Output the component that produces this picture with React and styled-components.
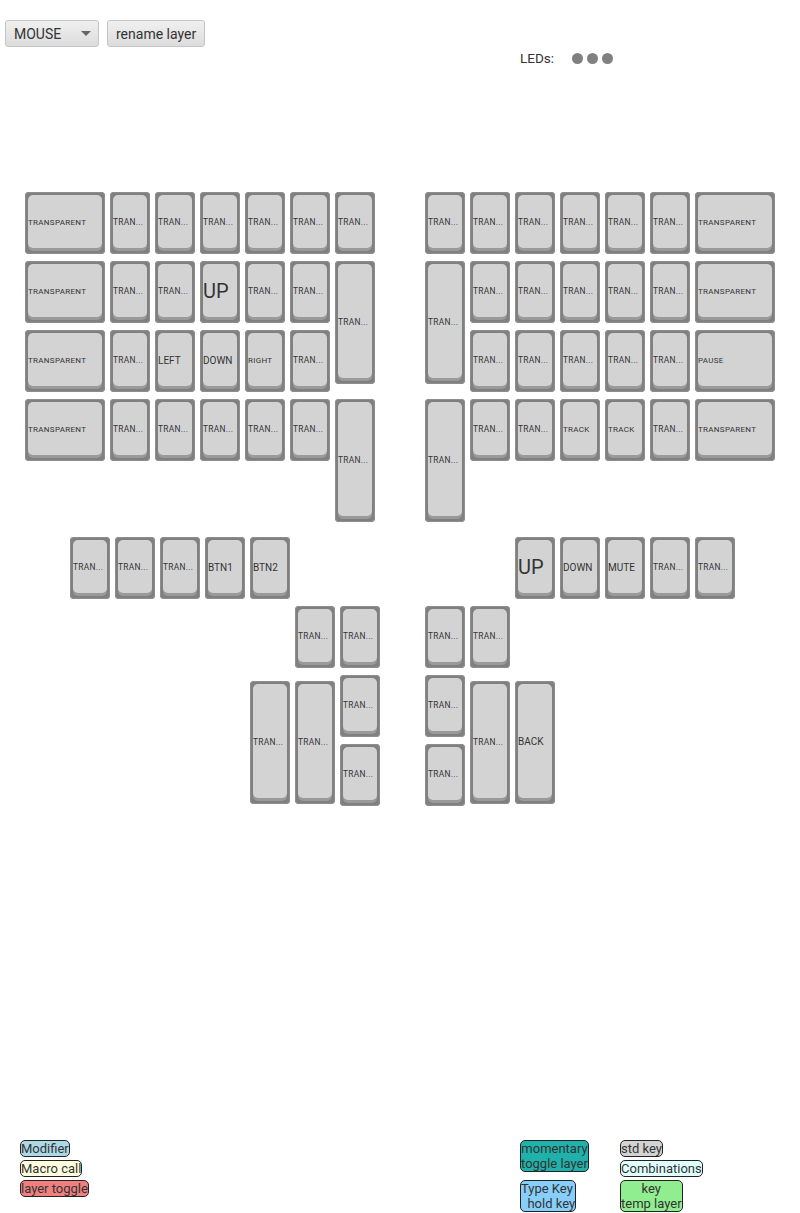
import React from 'react';
import styled, { createGlobalStyle } from 'styled-components';

const T = 'TRAN...';
const TP = 'TRANSPARENT';
const SM = 8;

// x, y are the key's top-left on the board, w/h are its size; fs is the label size
const k = (x, y, label = T, w = 40, h = 62, fs = 8.4) => ({ x, y, label, w, h, fs });

const keys = [
  // left hand
  k(25, 192, TP, 80, 62, SM), k(110, 192), k(155, 192), k(200, 192), k(245, 192), k(290, 192), k(335, 192),
  k(25, 261, TP, 80, 62, SM), k(110, 261), k(155, 261), k(200, 261, 'UP', 40, 62, 20), k(245, 261), k(290, 261), k(335, 261, T, 40, 123),
  k(25, 330, TP, 80, 62, SM), k(110, 330), k(155, 330, 'LEFT', 40, 62, 10), k(200, 330, 'DOWN', 40, 62, 10), k(245, 330, 'RIGHT', 40, 62, SM), k(290, 330),
  k(25, 399, TP, 80, 62, SM), k(110, 399), k(155, 399), k(200, 399), k(245, 399), k(290, 399), k(335, 399, T, 40, 123),
  // right hand
  k(425, 192), k(470, 192), k(515, 192), k(560, 192), k(605, 192), k(650, 192), k(695, 192, TP, 80, 62, SM),
  k(425, 261, T, 40, 123), k(470, 261), k(515, 261), k(560, 261), k(605, 261), k(650, 261), k(695, 261, TP, 80, 62, SM),
  k(470, 330), k(515, 330), k(560, 330), k(605, 330), k(650, 330), k(695, 330, 'PAUSE', 80, 62, SM),
  k(425, 399, T, 40, 123), k(470, 399), k(515, 399), k(560, 399, 'TRACK', 40, 62, SM), k(605, 399, 'TRACK', 40, 62, SM), k(650, 399), k(695, 399, TP, 80, 62, SM),
  // bottom row
  k(70, 537), k(115, 537), k(160, 537), k(205, 537, 'BTN1', 40, 62, 10), k(250, 537, 'BTN2', 40, 62, 10),
  k(515, 537, 'UP', 40, 62, 20), k(560, 537, 'DOWN', 40, 62, 10), k(605, 537, 'MUTE', 40, 62, 10), k(650, 537), k(695, 537),
  // thumb clusters
  k(295, 606), k(340, 606), k(425, 606), k(470, 606),
  k(340, 675), k(425, 675), k(340, 744), k(425, 744),
  k(250, 681, T, 40, 123), k(295, 681, T, 40, 123), k(470, 681, T, 40, 123), k(515, 681, 'BACK', 40, 123, 10),
];

const GlobalStyle = createGlobalStyle`
  html, body {
    margin: 0;
    padding: 0;
    background: #fff;
    font-family: Roboto, "Liberation Sans", sans-serif;
    color: #333;
  }
`;

const Page = styled.div`
  width: 800px;
  height: 1213px;
  display: flex;
  flex-direction: column;
  overflow: hidden;
`;

const Toolbar = styled.div`
  display: flex;
  gap: 8px;
  padding: 20px 0 0 5px;
  height: 27px;
`;

const Button = styled.button`
  box-sizing: border-box;
  height: 27px;
  padding: 0 8px;
  border: 1px solid #c4c4c4;
  border-radius: 3px;
  background: linear-gradient(#f0f0f0, #dcdcdc);
  font: 14px Roboto, "Liberation Sans", sans-serif;
  color: #333;
`;

const LayerSelect = styled(Button)`
  width: 94px;
  display: flex;
  align-items: center;
  justify-content: space-between;
  &::after {
    content: '';
    margin-right: -1px;
    border-left: 5px solid transparent;
    border-right: 5px solid transparent;
    border-top: 5px solid #666;
  }
`;

const Leds = styled.div`
  display: flex;
  align-items: center;
  gap: 4px;
  height: 14px;
  margin: 4px 0 0 520px;
  font-size: 13.5px;
  color: #333;
  span {
    margin-right: 14px;
  }
`;

const Led = styled.i`
  width: 11px;
  height: 11px;
  border-radius: 50%;
  background: #808080;
`;

const Board = styled.div`
  display: grid;
  grid-template-columns: repeat(800, 1px);
  grid-template-rows: repeat(620, 1px);
  margin-top: 127px;
  height: 620px;
`;

const Key = styled.div`
  grid-column: ${p => p.$x + 1} / span ${p => p.$w};
  grid-row: ${p => p.$y - 191} / span ${p => p.$h};
  box-sizing: border-box;
  padding: 3px 3px 6px;
  border-radius: 4px;
  background: #808080;
  box-shadow: inset 0 0 0 1px #8e8e8e;
  display: flex;
`;

const KeyCap = styled.div`
  flex: 1;
  display: flex;
  align-items: center;
  padding-top: 1px;
  border-radius: 5px;
  background: #d3d3d3;
  box-shadow: 0 3px 0 #9a9a9a;
  font-size: ${p => p.$fs}px;
  letter-spacing: ${p => (p.$fs < 10 ? '0.3px' : '0')};
  color: #333;
  white-space: nowrap;
  overflow: hidden;
`;

const Legend = styled.div`
  display: flex;
  padding-left: 20px;
  margin-top: 328px;
`;

const LegendColumn = styled.div`
  display: flex;
  flex-direction: column;
  align-items: flex-start;
  gap: ${p => p.$gap}px;
  width: ${p => p.$width}px;
`;

const Swatch = styled.div`
  box-sizing: border-box;
  border: 1px solid #222;
  border-radius: 5px;
  background: ${p => p.$bg};
  font-size: 13px;
  line-height: 15px;
  white-space: pre;
  text-align: ${p => p.$align || 'left'};
  color: #333;
`;

export default function App() {
  return (
    <Page>
      <GlobalStyle />
      <Toolbar>
        <LayerSelect as="div">MOUSE</LayerSelect>
        <Button>rename layer</Button>
      </Toolbar>
      <Leds>
        <span>LEDs:</span>
        <Led />
        <Led />
        <Led />
      </Leds>
      <Board>
        {keys.map((key, i) => (
          <Key key={i} $x={key.x} $y={key.y} $w={key.w} $h={key.h}>
            <KeyCap $fs={key.fs}>{key.label}</KeyCap>
          </Key>
        ))}
      </Board>
      <Legend>
        <LegendColumn $gap={3} $width={500}>
          <Swatch $bg="#add8e6">Modifier</Swatch>
          <Swatch $bg="#ffffe0">Macro call</Swatch>
          <Swatch $bg="#f08080">layer toggle</Swatch>
        </LegendColumn>
        <LegendColumn $gap={8} $width={100}>
          <Swatch $bg="#20b2aa" $align="center">{'momentary\ntoggle layer'}</Swatch>
          <Swatch $bg="#87cefa">{'Type Key\n  hold key'}</Swatch>
        </LegendColumn>
        <LegendColumn $gap={3} $width={100}>
          <Swatch $bg="#d3d3d3">std key</Swatch>
          <Swatch $bg="#e0ffff">Combinations</Swatch>
          <Swatch $bg="#90ee90" $align="center">{'key\ntemp layer'}</Swatch>
        </LegendColumn>
      </Legend>
    </Page>
  );
}
